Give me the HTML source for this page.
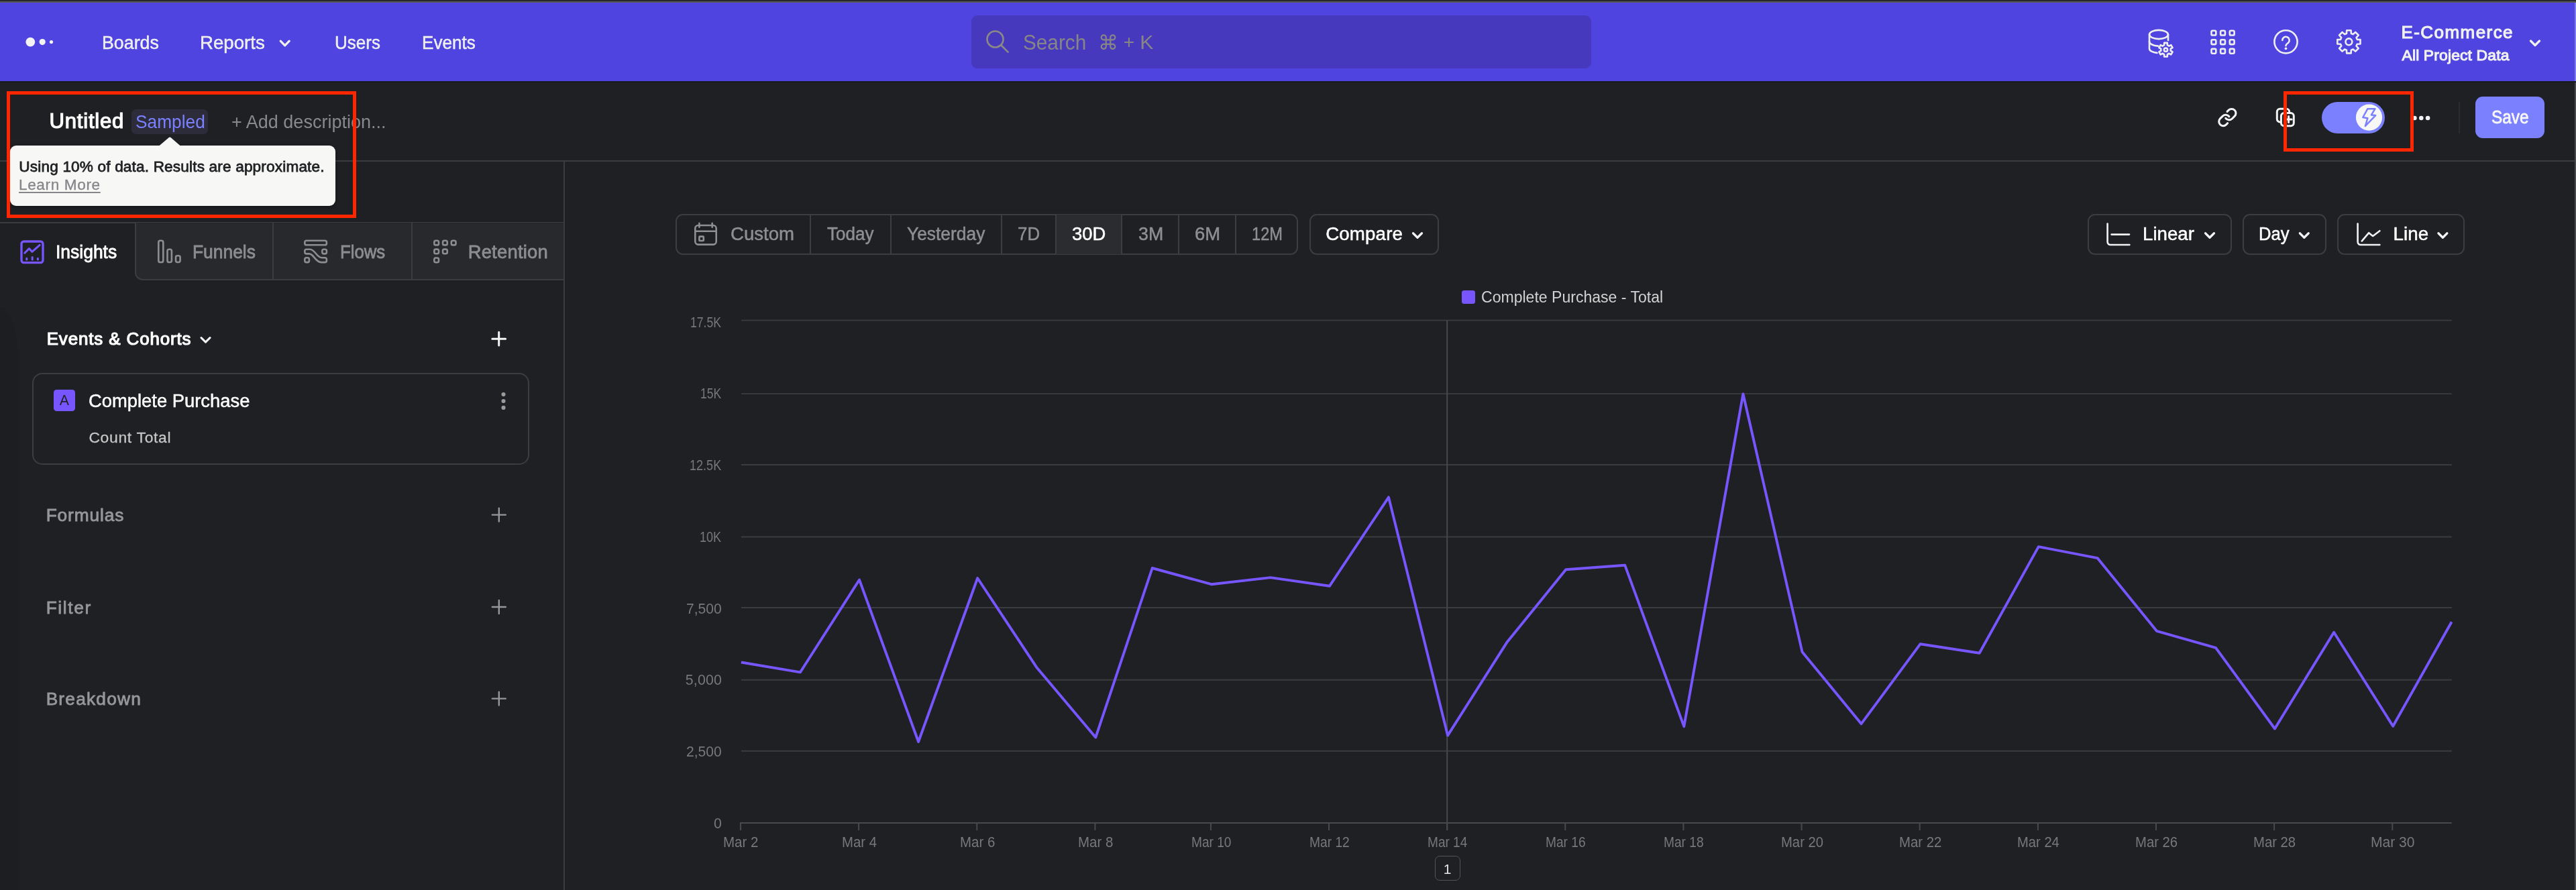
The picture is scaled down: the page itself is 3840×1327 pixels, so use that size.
<!DOCTYPE html>
<html lang="en"><head><meta charset="utf-8"><title>Insights - Untitled</title>
<style>
html,body{margin:0;padding:0;background:#1f2023;}
body{width:3840px;height:1327px;position:relative;overflow:hidden;font-family:"Liberation Sans",sans-serif;}
#root{will-change:transform;position:absolute;left:0;top:0;width:3840px;height:1327px;overflow:hidden;background:#1f2023;}
#root div,#root span{position:absolute;white-space:nowrap;}
#root svg{position:absolute;left:0;top:0;}
</style></head><body><div id="root">
<div style="left:0.0px;top:0.0px;width:3840.0px;height:2.0px;background:#27282c"></div>
<div style="left:0.0px;top:2.0px;width:3840.0px;height:2.0px;background:#59595a"></div>
<div style="left:0.0px;top:4.0px;width:3840.0px;height:117.0px;background:#4f44e0"></div>
<div style="left:0.0px;top:121.0px;width:3840.0px;height:2.0px;background:#18191b"></div>
<span style="left:151.85px;top:49.85px;font-size:27.7px;line-height:27.7px;color:#efefed;-webkit-text-stroke:0.5px #efefed;transform:scaleX(0.9670);transform-origin:0 0;">Boards</span>
<span style="left:297.98px;top:49.85px;font-size:27.7px;line-height:27.7px;color:#efefed;-webkit-text-stroke:0.5px #efefed;transform:scaleX(0.9977);transform-origin:0 0;">Reports</span>
<span style="left:499.24px;top:49.85px;font-size:27.7px;line-height:27.7px;color:#efefed;-webkit-text-stroke:0.5px #efefed;transform:scaleX(0.9394);transform-origin:0 0;">Users</span>
<span style="left:628.81px;top:49.85px;font-size:27.7px;line-height:27.7px;color:#efefed;-webkit-text-stroke:0.5px #efefed;transform:scaleX(0.9434);transform-origin:0 0;">Events</span>
<div style="left:1448.4px;top:23.4px;width:923.3px;height:78.3px;background:#4739bd;border-radius:9px"></div>
<span style="left:1525.05px;top:47.70px;font-size:30.6px;line-height:30.6px;color:#878685;transform:scaleX(0.9714);transform-origin:0 0;">Search</span>
<span style="left:1637.20px;top:48.55px;font-size:30.3px;line-height:30.3px;color:#878685;font-family:"DejaVu Sans",sans-serif;">⌘</span>
<span style="left:1674.63px;top:49.01px;font-size:28.1px;line-height:28.1px;color:#878685;">+</span>
<span style="left:1699.32px;top:48.04px;font-size:30.2px;line-height:30.2px;color:#878685;">K</span>
<span style="left:3579.44px;top:34.59px;font-size:26.0px;line-height:26.0px;color:#f1f1ef;letter-spacing:1.446px;-webkit-text-stroke:1.15px #f1f1ef;">E-Commerce</span>
<span style="left:3580.51px;top:71.22px;font-size:22.9px;line-height:22.9px;color:#f1f1ef;letter-spacing:0.142px;-webkit-text-stroke:1.1px #f1f1ef;">All Project Data</span>
<div style="left:0.0px;top:239.0px;width:3840.0px;height:2.0px;background:#3b3c40"></div>
<span style="left:73.60px;top:165.27px;font-size:31.1px;line-height:31.1px;color:#ffffff;letter-spacing:0.765px;-webkit-text-stroke:1.2px #ffffff;">Untitled</span>
<div style="left:196.0px;top:162.5px;width:113.8px;height:37.8px;background:#2c2c3b;border-radius:7px"></div>
<span style="left:201.51px;top:168.32px;font-size:27.5px;line-height:27.5px;color:#7b80ff;transform:scaleX(0.9563);transform-origin:0 0;">Sampled</span>
<span style="left:345.48px;top:168.32px;font-size:27.5px;line-height:27.5px;color:#88898d;transform:scaleX(0.9822);transform-origin:0 0;">+ Add description...</span>
<div style="left:3461.2px;top:151.6px;width:94.0px;height:47.0px;background:#7b80ff;border-radius:24px"></div>
<div style="left:3665.2px;top:152.0px;width:1.6px;height:46.7px;background:#2b2c30"></div>
<div style="left:3690.0px;top:144.0px;width:103.0px;height:62.3px;background:#7b80ff;border-radius:11px"></div>
<span style="left:3713.69px;top:160.91px;font-size:27.4px;line-height:27.4px;color:#f8f7f4;-webkit-text-stroke:0.8px #f8f7f4;transform:scaleX(0.8901);transform-origin:0 0;">Save</span>
<div style="left:839.8px;top:241.0px;width:2.0px;height:1086.0px;background:#3b3c40"></div>
<div style="left:3838.0px;top:123.0px;width:2.0px;height:1204.0px;background:#47484c"></div>
<div style="left:3838.0px;top:4.0px;width:2.0px;height:117.0px;background:#7f78ea"></div>
<div style="left:0.0px;top:458.0px;width:27.5px;height:869.0px;background:#1d1e21;border-top-right-radius:27.5px 84px"></div>
<div style="left:0.0px;top:330.8px;width:840.0px;height:2.0px;background:#3b3c40"></div>
<div style="left:201.0px;top:332.0px;width:639.0px;height:86.3px;background:#28292d;border-left:2px solid #3b3c40;border-bottom:2px solid #3b3c40;border-bottom-left-radius:12px;box-sizing:border-box"></div>
<div style="left:406.4px;top:332.0px;width:2.0px;height:86.0px;background:#3b3c40"></div>
<div style="left:612.8px;top:332.0px;width:2.0px;height:86.0px;background:#3b3c40"></div>
<span style="left:82.66px;top:362.01px;font-size:27.4px;line-height:27.4px;color:#ffffff;-webkit-text-stroke:0.8px #ffffff;transform:scaleX(0.9658);transform-origin:0 0;">Insights</span>
<span style="left:287.23px;top:362.01px;font-size:27.4px;line-height:27.4px;color:#8c8d91;-webkit-text-stroke:0.8px #8c8d91;transform:scaleX(0.9635);transform-origin:0 0;">Funnels</span>
<span style="left:506.79px;top:362.01px;font-size:27.4px;line-height:27.4px;color:#8c8d91;-webkit-text-stroke:0.8px #8c8d91;transform:scaleX(0.9398);transform-origin:0 0;">Flows</span>
<span style="left:697.65px;top:362.01px;font-size:27.4px;line-height:27.4px;color:#8c8d91;letter-spacing:0.229px;-webkit-text-stroke:0.8px #8c8d91;">Retention</span>
<span style="left:69.68px;top:492.68px;font-size:25.9px;line-height:25.9px;color:#ffffff;letter-spacing:0.895px;-webkit-text-stroke:1.2px #ffffff;">Events &amp; Cohorts</span>
<div style="left:47.8px;top:556.4px;width:741.2px;height:136.2px;border:2px solid #3c3d41;border-radius:15px;box-sizing:border-box"></div>
<div style="left:79.9px;top:581.3px;width:32.1px;height:31.7px;background:#7856ff;border-radius:4.5px"></div>
<span style="left:88.85px;top:586.87px;font-size:21.3px;line-height:21.3px;color:#1f2023;">A</span>
<span style="left:132.26px;top:583.65px;font-size:27.7px;line-height:27.7px;color:#ffffff;-webkit-text-stroke:0.5px #ffffff;transform:scaleX(0.9887);transform-origin:0 0;">Complete Purchase</span>
<span style="left:132.39px;top:641.42px;font-size:22.9px;line-height:22.9px;color:#c6c6c6;letter-spacing:0.687px;-webkit-text-stroke:0.3px #c6c6c6;">Count Total</span>
<span style="left:68.64px;top:755.34px;font-size:26.3px;line-height:26.3px;color:#96979b;letter-spacing:0.872px;-webkit-text-stroke:0.8px #96979b;">Formulas</span>
<span style="left:68.64px;top:892.74px;font-size:26.3px;line-height:26.3px;color:#96979b;letter-spacing:1.630px;-webkit-text-stroke:0.8px #96979b;">Filter</span>
<span style="left:68.64px;top:1029.34px;font-size:26.3px;line-height:26.3px;color:#96979b;letter-spacing:1.199px;-webkit-text-stroke:0.8px #96979b;">Breakdown</span>
<div style="left:1007.3px;top:318.6px;width:928.0px;height:61.2px;border:2px solid #3c3d41;border-radius:11px;box-sizing:border-box"></div>
<div style="left:1573.5px;top:319.8px;width:98.7px;height:58.8px;background:#2b2c30"></div>
<div style="left:1206.6px;top:319.5px;width:2.0px;height:59.5px;background:#3c3d41"></div>
<div style="left:1326.7px;top:319.5px;width:2.0px;height:59.5px;background:#3c3d41"></div>
<div style="left:1492.3px;top:319.5px;width:2.0px;height:59.5px;background:#3c3d41"></div>
<div style="left:1572.5px;top:319.5px;width:2.0px;height:59.5px;background:#3c3d41"></div>
<div style="left:1671.2px;top:319.5px;width:2.0px;height:59.5px;background:#3c3d41"></div>
<div style="left:1756.0px;top:319.5px;width:2.0px;height:59.5px;background:#3c3d41"></div>
<div style="left:1841.3px;top:319.5px;width:2.0px;height:59.5px;background:#3c3d41"></div>
<span style="left:1088.65px;top:334.95px;font-size:27.7px;line-height:27.7px;color:#8e8f93;-webkit-text-stroke:0.5px #8e8f93;transform:scaleX(0.9967);transform-origin:0 0;">Custom</span>
<span style="left:1232.67px;top:334.95px;font-size:27.7px;line-height:27.7px;color:#8e8f93;-webkit-text-stroke:0.5px #8e8f93;transform:scaleX(0.9394);transform-origin:0 0;">Today</span>
<span style="left:1352.37px;top:334.95px;font-size:27.7px;line-height:27.7px;color:#8e8f93;-webkit-text-stroke:0.5px #8e8f93;transform:scaleX(0.9530);transform-origin:0 0;">Yesterday</span>
<span style="left:1516.92px;top:334.95px;font-size:27.7px;line-height:27.7px;color:#8e8f93;-webkit-text-stroke:0.5px #8e8f93;transform:scaleX(0.9338);transform-origin:0 0;">7D</span>
<span style="left:1598.20px;top:334.95px;font-size:27.7px;line-height:27.7px;color:#ffffff;-webkit-text-stroke:0.5px #ffffff;transform:scaleX(0.9910);transform-origin:0 0;">30D</span>
<span style="left:1697.03px;top:334.95px;font-size:27.7px;line-height:27.7px;color:#8e8f93;-webkit-text-stroke:0.5px #8e8f93;transform:scaleX(0.9672);transform-origin:0 0;">3M</span>
<span style="left:1781.46px;top:334.95px;font-size:27.7px;line-height:27.7px;color:#8e8f93;-webkit-text-stroke:0.5px #8e8f93;transform:scaleX(0.9914);transform-origin:0 0;">6M</span>
<span style="left:1866.35px;top:334.95px;font-size:27.7px;line-height:27.7px;color:#8e8f93;-webkit-text-stroke:0.5px #8e8f93;transform:scaleX(0.8545);transform-origin:0 0;">12M</span>
<div style="left:1951.7px;top:318.6px;width:193.8px;height:61.2px;border:2px solid #3c3d41;border-radius:11px;box-sizing:border-box"></div>
<span style="left:1976.14px;top:334.95px;font-size:27.7px;line-height:27.7px;color:#ffffff;letter-spacing:0.152px;-webkit-text-stroke:0.5px #ffffff;">Compare</span>
<div style="left:3111.5px;top:318.6px;width:215.3px;height:61.2px;border:2px solid #3c3d41;border-radius:11px;box-sizing:border-box"></div>
<div style="left:3343.0px;top:318.6px;width:124.9px;height:61.2px;border:2px solid #3c3d41;border-radius:11px;box-sizing:border-box"></div>
<div style="left:3484.0px;top:318.6px;width:190.0px;height:61.2px;border:2px solid #3c3d41;border-radius:11px;box-sizing:border-box"></div>
<span style="left:3194.28px;top:334.95px;font-size:27.7px;line-height:27.7px;color:#ffffff;-webkit-text-stroke:0.5px #ffffff;transform:scaleX(0.9991);transform-origin:0 0;">Linear</span>
<span style="left:3366.94px;top:334.95px;font-size:27.7px;line-height:27.7px;color:#ffffff;-webkit-text-stroke:0.5px #ffffff;transform:scaleX(0.9269);transform-origin:0 0;">Day</span>
<span style="left:3567.58px;top:334.95px;font-size:27.7px;line-height:27.7px;color:#ffffff;letter-spacing:0.111px;-webkit-text-stroke:0.5px #ffffff;">Line</span>
<div style="left:2179.3px;top:433.2px;width:19.7px;height:19.8px;background:#7856ff;border-radius:3.5px"></div>
<span style="left:2208.03px;top:432.01px;font-size:23.5px;line-height:23.5px;color:#d2d2d2;transform:scaleX(0.9809);transform-origin:0 0;">Complete Purchase - Total</span>
<span style="left:1029.26px;top:471.17px;font-size:21.3px;line-height:21.3px;color:#77787c;transform:scaleX(0.8272);transform-origin:0 0;">17.5K</span>
<span style="left:1044.17px;top:576.87px;font-size:21.3px;line-height:21.3px;color:#77787c;transform:scaleX(0.8214);transform-origin:0 0;">15K</span>
<span style="left:1028.12px;top:683.77px;font-size:21.3px;line-height:21.3px;color:#77787c;transform:scaleX(0.8476);transform-origin:0 0;">12.5K</span>
<span style="left:1043.12px;top:790.77px;font-size:21.3px;line-height:21.3px;color:#77787c;transform:scaleX(0.8492);transform-origin:0 0;">10K</span>
<span style="left:1023.22px;top:897.97px;font-size:21.3px;line-height:21.3px;color:#77787c;transform:scaleX(0.9888);transform-origin:0 0;">7,500</span>
<span style="left:1021.65px;top:1003.87px;font-size:21.3px;line-height:21.3px;color:#77787c;letter-spacing:0.247px;">5,000</span>
<span style="left:1023.24px;top:1110.97px;font-size:21.3px;line-height:21.3px;color:#77787c;transform:scaleX(0.9884);transform-origin:0 0;">2,500</span>
<span style="left:1064.09px;top:1218.27px;font-size:21.3px;line-height:21.3px;color:#77787c;">0</span>
<span style="left:1078.47px;top:1245.87px;font-size:21.3px;line-height:21.3px;color:#77787c;transform:scaleX(0.9627);transform-origin:0 0;">Mar 2</span>
<span style="left:1254.62px;top:1245.87px;font-size:21.3px;line-height:21.3px;color:#77787c;transform:scaleX(0.9544);transform-origin:0 0;">Mar 4</span>
<span style="left:1430.75px;top:1245.87px;font-size:21.3px;line-height:21.3px;color:#77787c;transform:scaleX(0.9602);transform-origin:0 0;">Mar 6</span>
<span style="left:1606.89px;top:1245.87px;font-size:21.3px;line-height:21.3px;color:#77787c;transform:scaleX(0.9600);transform-origin:0 0;">Mar 8</span>
<span style="left:1775.72px;top:1245.87px;font-size:21.3px;line-height:21.3px;color:#77787c;transform:scaleX(0.8978);transform-origin:0 0;">Mar 10</span>
<span style="left:1951.86px;top:1245.87px;font-size:21.3px;line-height:21.3px;color:#77787c;transform:scaleX(0.9012);transform-origin:0 0;">Mar 12</span>
<span style="left:2128.01px;top:1245.87px;font-size:21.3px;line-height:21.3px;color:#77787c;transform:scaleX(0.8949);transform-origin:0 0;">Mar 14</span>
<span style="left:2304.14px;top:1245.87px;font-size:21.3px;line-height:21.3px;color:#77787c;transform:scaleX(0.8993);transform-origin:0 0;">Mar 16</span>
<span style="left:2480.28px;top:1245.87px;font-size:21.3px;line-height:21.3px;color:#77787c;transform:scaleX(0.8991);transform-origin:0 0;">Mar 18</span>
<span style="left:2654.63px;top:1245.87px;font-size:21.3px;line-height:21.3px;color:#77787c;transform:scaleX(0.9512);transform-origin:0 0;">Mar 20</span>
<span style="left:2830.76px;top:1245.87px;font-size:21.3px;line-height:21.3px;color:#77787c;transform:scaleX(0.9547);transform-origin:0 0;">Mar 22</span>
<span style="left:3006.91px;top:1245.87px;font-size:21.3px;line-height:21.3px;color:#77787c;transform:scaleX(0.9481);transform-origin:0 0;">Mar 24</span>
<span style="left:3183.05px;top:1245.87px;font-size:21.3px;line-height:21.3px;color:#77787c;transform:scaleX(0.9527);transform-origin:0 0;">Mar 26</span>
<span style="left:3359.19px;top:1245.87px;font-size:21.3px;line-height:21.3px;color:#77787c;transform:scaleX(0.9526);transform-origin:0 0;">Mar 28</span>
<span style="left:3534.06px;top:1245.87px;font-size:21.3px;line-height:21.3px;color:#77787c;transform:scaleX(0.9888);transform-origin:0 0;">Mar 30</span>
<div style="left:2138.8px;top:1275.6px;width:38.0px;height:37.9px;border:1.5px solid #525357;border-radius:7px;box-sizing:border-box;background:#1f2023"></div>
<span style="left:2151.67px;top:1285.02px;font-size:21px;line-height:21px;color:#e4e4e4;font-family:"DejaVu Sans",sans-serif;">1</span>
<div style="left:14.8px;top:217.2px;width:485.2px;height:89.9px;background:#f7f7f5;border-radius:9px;box-shadow:0 2px 6px rgba(0,0,0,.35)"></div>
<span style="left:28.36px;top:237.97px;font-size:22.6px;line-height:22.6px;color:#1f2023;letter-spacing:0.163px;-webkit-text-stroke:0.8px #1f2023;">Using 10% of data. Results are approximate.</span>
<span style="left:28.00px;top:265.17px;font-size:22.6px;line-height:22.6px;color:#85868a;letter-spacing:0.621px;-webkit-text-stroke:0.3px #85868a;text-decoration:underline;text-decoration-thickness:1.6px;text-underline-offset:3px;">Learn More</span>
<svg width="3840" height="1327" viewBox="0 0 3840 1327">
<circle cx="45.3" cy="62.6" r="6.9" fill="#f4f4f2"/><circle cx="63.2" cy="62.6" r="4.6" fill="#f4f4f2"/><circle cx="76.5" cy="62.6" r="2.6" fill="#f4f4f2"/>
<path d="M418.2 61.2 L424.7 67.8 L431.2 61.2" fill="none" stroke="#efefed" stroke-width="3.3" stroke-linecap="round" stroke-linejoin="round"/>
<circle cx="1483.5" cy="58.5" r="12" fill="none" stroke="#8a8987" stroke-width="2.7"/><path d="M1492.2 67.2 L1502.6 77.6" stroke="#8a8987" stroke-width="2.7" stroke-linecap="round"/>
<g fill="none" stroke="#eeeeee" stroke-width="2.6" stroke-linecap="round" stroke-linejoin="round"><ellipse cx="3218" cy="51.5" rx="14" ry="6.6"/><path d="M3204 51.5 V72.5 c0 3.2 5 5.8 11.5 6.4"/><path d="M3232 51.5 V60"/><path d="M3204 62 c0 3.4 6 6.3 13 6.6"/></g>
<path d="M3226.14 67.19 L3226.19 63.86 L3230.81 63.86 L3230.86 67.19 L3233.39 68.65 L3236.30 67.03 L3238.61 71.03 L3235.75 72.74 L3235.75 75.66 L3238.61 77.37 L3236.30 81.37 L3233.39 79.75 L3230.86 81.21 L3230.81 84.54 L3226.19 84.54 L3226.14 81.21 L3223.61 79.75 L3220.70 81.37 L3218.39 77.37 L3221.25 75.66 L3221.25 72.74 L3218.39 71.03 L3220.70 67.03 L3223.61 68.65 Z" fill="none" stroke="#eeeeee" stroke-width="2.6" stroke-linejoin="round"/><circle cx="3228.5" cy="74.2" r="2.6" fill="none" stroke="#eeeeee" stroke-width="2.6"/>
<rect x="3296.50" y="45.70" width="6.8" height="6.8" rx="1.6" fill="none" stroke="#eeeeee" stroke-width="2.6"/>
<rect x="3310.15" y="45.70" width="6.8" height="6.8" rx="1.6" fill="none" stroke="#eeeeee" stroke-width="2.6"/>
<rect x="3323.80" y="45.70" width="6.8" height="6.8" rx="1.6" fill="none" stroke="#eeeeee" stroke-width="2.6"/>
<rect x="3296.50" y="59.30" width="6.8" height="6.8" rx="1.6" fill="none" stroke="#eeeeee" stroke-width="2.6"/>
<rect x="3310.15" y="59.30" width="6.8" height="6.8" rx="1.6" fill="none" stroke="#eeeeee" stroke-width="2.6"/>
<rect x="3323.80" y="59.30" width="6.8" height="6.8" rx="1.6" fill="none" stroke="#eeeeee" stroke-width="2.6"/>
<rect x="3296.50" y="72.90" width="6.8" height="6.8" rx="1.6" fill="none" stroke="#eeeeee" stroke-width="2.6"/>
<rect x="3310.15" y="72.90" width="6.8" height="6.8" rx="1.6" fill="none" stroke="#eeeeee" stroke-width="2.6"/>
<rect x="3323.80" y="72.90" width="6.8" height="6.8" rx="1.6" fill="none" stroke="#eeeeee" stroke-width="2.6"/>
<circle cx="3407.5" cy="62.3" r="17.1" fill="none" stroke="#eeeeee" stroke-width="2.6"/>
<path d="M3402.3 60 a5.2 5.2 0 1 1 8.9 3.7 c-2.5 1.8 -3.7 2.4 -3.7 4.6" fill="none" stroke="#eeeeee" stroke-width="2.6" stroke-linecap="round"/><circle cx="3407.5" cy="72.3" r="1.9" fill="#eeeeee"/>
<path d="M3497.95 49.97 L3498.20 45.20 L3504.60 45.20 L3504.85 49.97 L3507.68 51.15 L3511.23 47.95 L3515.75 52.47 L3512.55 56.02 L3513.73 58.85 L3518.50 59.10 L3518.50 65.50 L3513.73 65.75 L3512.55 68.58 L3515.75 72.13 L3511.23 76.65 L3507.68 73.45 L3504.85 74.63 L3504.60 79.40 L3498.20 79.40 L3497.95 74.63 L3495.12 73.45 L3491.57 76.65 L3487.05 72.13 L3490.25 68.58 L3489.07 65.75 L3484.30 65.50 L3484.30 59.10 L3489.07 58.85 L3490.25 56.02 L3487.05 52.47 L3491.57 47.95 L3495.12 51.15 Z" fill="none" stroke="#eeeeee" stroke-width="2.6" stroke-linejoin="round"/><circle cx="3501.4" cy="62.3" r="4.9" fill="none" stroke="#eeeeee" stroke-width="2.6"/>
<path d="M3772.5 61 l6.5 6.5 l6.5 -6.5" fill="none" stroke="#f1f1ef" stroke-width="3.3" stroke-linecap="round" stroke-linejoin="round"/>
<g fill="none" stroke="#f4f4f4" stroke-width="2.4" stroke-linecap="round" stroke-linejoin="round" transform="translate(3305.1 159.8) scale(1.27)"><path d="M10 13a5 5 0 0 0 7.54.54l3-3a5 5 0 0 0-7.07-7.07l-1.72 1.71"/><path d="M14 11a5 5 0 0 0-7.54-.54l-3 3a5 5 0 0 0 7.07 7.07l1.71-1.71"/></g>
<g fill="none" stroke="#f4f4f4" stroke-width="3" stroke-linecap="round" stroke-linejoin="round"><path d="M3400 182 h-1.2 a4.5 4.5 0 0 1 -4.5 -4.5 v-10.8 a4.5 4.5 0 0 1 4.5 -4.5 h9.4 a4.5 4.5 0 0 1 4.5 4.5 v1.2"/><rect x="3400.4" y="168.4" width="18.9" height="19.4" rx="4.5"/><path d="M3411.6 173.6 v9 M3407.1 178.1 h9"/></g>
<circle cx="3531.5" cy="175.1" r="19.6" fill="#f7f7f5"/>
<path d="M3529.3 162.3 H3540.4 L3534.9 171.4 L3541.2 172.1 L3525.9 188 L3529.4 176.2 L3522.3 175 Z" fill="none" stroke="#7b80ff" stroke-width="2.5" stroke-linejoin="round"/>
<circle cx="3599.4" cy="176" r="3.3" fill="#f2f2f2"/>
<circle cx="3609.3" cy="176" r="3.3" fill="#f2f2f2"/>
<circle cx="3619.1" cy="176" r="3.3" fill="#f2f2f2"/>
<rect x="32" y="360" width="32" height="31.6" rx="3.5" fill="none" stroke="#7856ff" stroke-width="3.3"/><path d="M36.8 377.2 L43.4 370.6 L47.9 375.4 L59.2 365.4" fill="none" stroke="#7856ff" stroke-width="3" stroke-linecap="round" stroke-linejoin="round"/><path d="M39.8 385.2 v1.8 M48.2 383.6 v3.4 M56.4 385.2 v1.8" stroke="#7856ff" stroke-width="3" stroke-linecap="round"/>
<g fill="none" stroke="#8c8d91" stroke-width="2.6"><rect x="236.3" y="358.7" width="7" height="32.3" rx="2.6"/><rect x="249.5" y="371.7" width="6.4" height="19.3" rx="2.6"/><rect x="262" y="381.3" width="6.6" height="9.7" rx="2.4"/></g>
<g fill="none" stroke="#8c8d91" stroke-width="2.6" stroke-linejoin="round"><rect x="454.3" y="358.7" width="32.6" height="6.6" rx="2.6"/><rect x="480.3" y="371.7" width="6.6" height="6.7" rx="2.4"/><rect x="454.3" y="384.3" width="6.6" height="6.8" rx="2.4"/><path d="M456.9 371.7 h5 c8 0 10 12.6 18 12.6 h4.4 a2.6 2.6 0 0 1 2.6 2.6 v1.6 a2.6 2.6 0 0 1 -2.6 2.6 h-5.4 c-9 0 -11 -12.7 -18 -12.7 h-4 a2.6 2.6 0 0 1 -2.6 -2.6 v-1.5 a2.6 2.6 0 0 1 2.6 -2.6 z"/></g>
<g fill="none" stroke="#8c8d91" stroke-width="2.6"><rect x="647.30" y="358.70" width="6.7" height="6.7" rx="2.2"/><rect x="660.05" y="358.70" width="6.7" height="6.7" rx="2.2"/><rect x="672.80" y="358.70" width="6.7" height="6.7" rx="2.2"/><rect x="647.30" y="371.60" width="6.7" height="6.7" rx="2.2"/><rect x="660.05" y="371.60" width="6.7" height="6.7" rx="2.2"/><rect x="647.30" y="384.50" width="6.7" height="6.7" rx="2.2"/></g>
<path d="M300 503.6 l6.5 6.5 l6.5 -6.5" fill="none" stroke="#f2f2f2" stroke-width="3.1" stroke-linecap="round" stroke-linejoin="round"/>
<path d="M733.8 505.2 h19.8 M743.7 495.3 v19.8" stroke="#f5f5f5" stroke-width="3" stroke-linecap="round"/>
<circle cx="750.5" cy="588.1" r="3.05" fill="#9a9a9a"/>
<circle cx="750.5" cy="598" r="3.05" fill="#9a9a9a"/>
<circle cx="750.5" cy="607.9" r="3.05" fill="#9a9a9a"/>
<path d="M733.8 767.6 h20 M743.8 757.6 v20" stroke="#96979b" stroke-width="2.4" stroke-linecap="round"/>
<path d="M733.8 905 h20 M743.8 895 v20" stroke="#96979b" stroke-width="2.4" stroke-linecap="round"/>
<path d="M733.8 1041.6 h20 M743.8 1031.6 v20" stroke="#96979b" stroke-width="2.4" stroke-linecap="round"/>
<g fill="none" stroke="#8e8f93" stroke-width="2.6" stroke-linecap="round" stroke-linejoin="round"><rect x="1036.3" y="336" width="31.4" height="28.6" rx="4.5"/><path d="M1036.3 344.8 h31.4 M1042.4 332.8 v6 M1061.7 332.8 v6"/><rect x="1042.4" y="352.6" width="6.4" height="6.4" rx="0.8"/></g>
<path d="M2106.5 347.75 l6.5 6.5 l6.5 -6.5" fill="none" stroke="#f4f4f4" stroke-width="3.2" stroke-linecap="round" stroke-linejoin="round"/>
<g fill="none" stroke="#f2f2f2" stroke-width="2.6" stroke-linecap="round" stroke-linejoin="round"><path d="M3141.6 333.6 v27 a4.4 4.4 0 0 0 4.4 4.4 h28.4"/><path d="M3147.6 349.6 h26.4"/><path d="M3514.6 333.6 v27 a4.4 4.4 0 0 0 4.4 4.4 h28.4"/><path d="M3520.8 359.4 L3531.2 347.2 L3537.2 352 L3547.4 344.2"/></g>
<path d="M3287.5 347.75 l6.5 6.5 l6.5 -6.5" fill="none" stroke="#f4f4f4" stroke-width="3.2" stroke-linecap="round" stroke-linejoin="round"/>
<path d="M3428.3 347.75 l6.5 6.5 l6.5 -6.5" fill="none" stroke="#f4f4f4" stroke-width="3.2" stroke-linecap="round" stroke-linejoin="round"/>
<path d="M3634.9 347.75 l6.5 6.5 l6.5 -6.5" fill="none" stroke="#f4f4f4" stroke-width="3.2" stroke-linecap="round" stroke-linejoin="round"/>
<path d="M1104.9 477.6 H3654.8" stroke="#3b3c40" stroke-width="1.9"/>
<path d="M1104.9 587.1 H3654.8" stroke="#3b3c40" stroke-width="1.9"/>
<path d="M1104.9 693 H3654.8" stroke="#3b3c40" stroke-width="1.9"/>
<path d="M1104.9 800.5 H3654.8" stroke="#3b3c40" stroke-width="1.9"/>
<path d="M1104.9 906 H3654.8" stroke="#3b3c40" stroke-width="1.9"/>
<path d="M1104.9 1013.8 H3654.8" stroke="#3b3c40" stroke-width="1.9"/>
<path d="M1104.9 1119.8 H3654.8" stroke="#3b3c40" stroke-width="1.9"/>
<path d="M1103.0 1227 H3654.8" stroke="#48494d" stroke-width="2"/>
<path d="M2157.2 477.6 V1238" stroke="#48494d" stroke-width="1.9"/>
<path d="M1104.0 1227 V1238" stroke="#48494d" stroke-width="2"/>
<path d="M1280.1 1227 V1238" stroke="#48494d" stroke-width="2"/>
<path d="M1456.3 1227 V1238" stroke="#48494d" stroke-width="2"/>
<path d="M1632.4 1227 V1238" stroke="#48494d" stroke-width="2"/>
<path d="M1804.9 1227 V1238" stroke="#48494d" stroke-width="2"/>
<path d="M1981.0 1227 V1238" stroke="#48494d" stroke-width="2"/>
<path d="M2157.2 1227 V1238" stroke="#48494d" stroke-width="2"/>
<path d="M2333.3 1227 V1238" stroke="#48494d" stroke-width="2"/>
<path d="M2509.4 1227 V1238" stroke="#48494d" stroke-width="2"/>
<path d="M2685.6 1227 V1238" stroke="#48494d" stroke-width="2"/>
<path d="M2861.7 1227 V1238" stroke="#48494d" stroke-width="2"/>
<path d="M3037.9 1227 V1238" stroke="#48494d" stroke-width="2"/>
<path d="M3214.0 1227 V1238" stroke="#48494d" stroke-width="2"/>
<path d="M3390.1 1227 V1238" stroke="#48494d" stroke-width="2"/>
<path d="M3566.3 1227 V1238" stroke="#48494d" stroke-width="2"/>
<polyline points="1104.9,987.5 1193.0,1002.3 1281.0,864.5 1369.1,1106.0 1457.2,862.0 1545.2,994.9 1633.3,1099.4 1717.7,847.0 1805.8,871.2 1893.9,861.1 1981.9,873.8 2070.0,741.4 2158.1,1096.6 2246.1,958.1 2334.2,849.2 2422.3,842.8 2510.3,1083.2 2598.4,587.3 2686.5,971.9 2774.6,1079.2 2862.6,960.2 2950.7,973.8 3038.8,815.1 3126.8,832.2 3214.9,940.8 3303.0,965.8 3391.0,1086.5 3479.1,942.7 3567.2,1082.8 3654.6,927.3" fill="none" stroke="#7856ff" stroke-width="3.9" stroke-linejoin="round" stroke-linecap="butt"/>
<path d="M236.5 218 L251.6 205.2 q1.6 -1.3 3.2 0 L269.5 218 z" fill="#f7f7f5"/>
</svg>
<div style="left:10px;top:136px;width:520.6px;height:189.1px;border:5.2px solid #ff2600;box-sizing:border-box"></div>
<div style="left:3403.7px;top:136px;width:194.3px;height:90px;border:5.2px solid #ff2600;box-sizing:border-box"></div>
</div></body></html>
